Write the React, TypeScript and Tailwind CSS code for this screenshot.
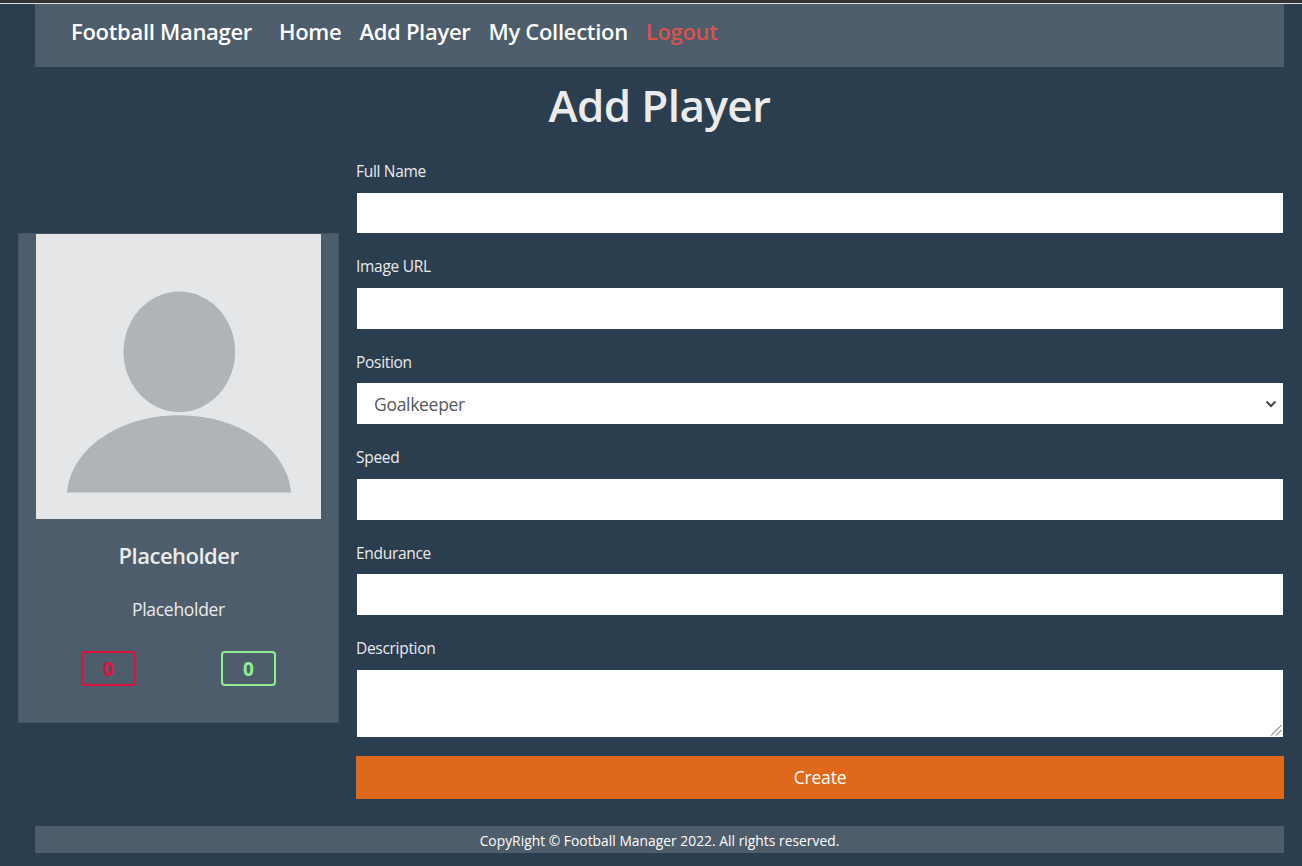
const links = ["Home", "Add Player", "My Collection"];

function Field({ label, className, children }: { label: string; className: string; children: React.ReactNode }) {
  return (
    <div className="flex flex-col">
      <label className={`flex items-end text-[15.5px] leading-6 tracking-[-0.3px] text-[#ebebeb] ${className}`}>
        {label}
      </label>
      {children}
    </div>
  );
}

function Avatar() {
  return (
    <svg viewBox="0 0 285 285" className="block size-[285px] bg-[#e4e6e8]" aria-hidden="true">
      <ellipse cx="143.3" cy="117.8" rx="55.8" ry="60.2" fill="#aeb4b8" />
      <path d="M31 258.4C35 214 84 181.3 143 181.3S251 214 255 258.4Z" fill="#aeb4b8" />
    </svg>
  );
}

export default function App() {
  return (
    <div className="flex h-[866px] w-[1302px] flex-col overflow-hidden bg-[#2b3e4f] font-['Open_Sans',sans-serif] text-[#ebebeb]">
      <div className="h-1 shrink-0 border-b border-[#d8dadb] bg-[#333333]" />

      <nav className="ml-[35px] flex h-[63px] w-[1249px] shrink-0 items-start bg-[#4e5d6b] pt-[11px] pl-[36px] text-[22px] leading-8 font-semibold tracking-[-0.3px] text-white">
        <a className="w-[208px]">Football Manager</a>
        <div className="flex gap-[18px]">
          {links.map((link) => (
            <a key={link}>{link}</a>
          ))}
          <a className="text-[#d9534f]">Logout</a>
        </div>
      </nav>

      <h1 className="mt-[11px] ml-[35px] w-[1249px] shrink-0 text-center text-[44px] leading-[54px] font-semibold tracking-[-0.6px]">
        Add Player
      </h1>

      <main className="flex h-[667px] shrink-0 items-start gap-[17px] pt-[20px] pl-[18px]">
        <aside className="mt-[81px] flex h-[490px] w-[321px] flex-col items-center border border-[#445464] bg-[#4e5d6b]">
          <Avatar />
          <h2 className="mt-[23px] text-[22px] leading-[26px] font-semibold tracking-[-0.5px]">Placeholder</h2>
          <p className="mt-[27px] text-[17.5px] leading-7 tracking-[-0.3px]">Placeholder</p>
          <div className="mt-7 flex gap-[85px] text-[19px] leading-[33px] font-bold">
            <span className="h-[35px] w-[55px] rounded-[4px] border-2 border-[#dc143c] text-center text-[#dc143c]">0</span>
            <span className="h-[35px] w-[55px] rounded-[4px] border-2 border-[#90ee90] text-center text-[#90ee90]">0</span>
          </div>
        </aside>

        <form className="flex w-[928px] flex-col">
          <Field label="Full Name" className="h-[41px] pb-[10px]">
            <input className="mx-px h-[40px] bg-white px-[17px] text-[#4e5d6c]" />
          </Field>
          <Field label="Image URL" className="h-[55px] pb-[10px]">
            <input className="mx-px h-[41px] bg-white px-[17px] text-[#4e5d6c]" />
          </Field>
          <Field label="Position" className="h-[54px] pb-[9px]">
            <div className="mx-px grid h-[41px] items-center bg-white">
              <select className="col-start-1 row-start-1 h-[41px] appearance-none bg-transparent px-[17px] pt-px text-[17.5px] tracking-[-0.3px] text-[#55595c]">
                <option>Goalkeeper</option>
              </select>
              <svg viewBox="0 0 12 8" className="pointer-events-none col-start-1 row-start-1 mr-[6px] h-2 w-3 justify-self-end" aria-hidden="true">
                <path d="M1.5 1.5 6 6l4.5-4.5" fill="none" stroke="#43484d" strokeWidth="2" />
              </svg>
            </div>
          </Field>
          <Field label="Speed" className="h-[55px] pb-[10px]">
            <input className="mx-px h-[41px] bg-white px-[17px] text-[#4e5d6c]" />
          </Field>
          <Field label="Endurance" className="h-[54px] pb-[9px]">
            <input className="mx-px h-[41px] bg-white px-[17px] text-[#4e5d6c]" />
          </Field>
          <Field label="Description" className="h-[55px] pb-[10px]">
            <div className="mx-px grid h-[67px] bg-white">
              <textarea className="col-start-1 row-start-1 resize-none bg-transparent px-[17px] text-[#4e5d6c]" />
              <svg viewBox="0 0 12 12" className="pointer-events-none col-start-1 row-start-1 mr-px mb-px size-3 self-end justify-self-end" aria-hidden="true">
                <path d="M1 11.5 11.5 1M6 11.5 11.5 6" fill="none" stroke="#555555" strokeWidth="1" />
              </svg>
            </div>
          </Field>
          <button type="button" className="mt-[19px] h-[43px] bg-[#df691a] text-[17.5px] tracking-[-0.2px] text-white">
            Create
          </button>
        </form>
      </main>

      <footer className="mt-[27px] ml-[35px] h-[27px] w-[1249px] shrink-0 bg-[#4e5d6b] pt-[2px] text-center text-[13.8px] leading-[26px] font-medium tracking-[0.03px] text-white">
        CopyRight © Football Manager 2022. All rights reserved.
      </footer>
    </div>
  );
}
